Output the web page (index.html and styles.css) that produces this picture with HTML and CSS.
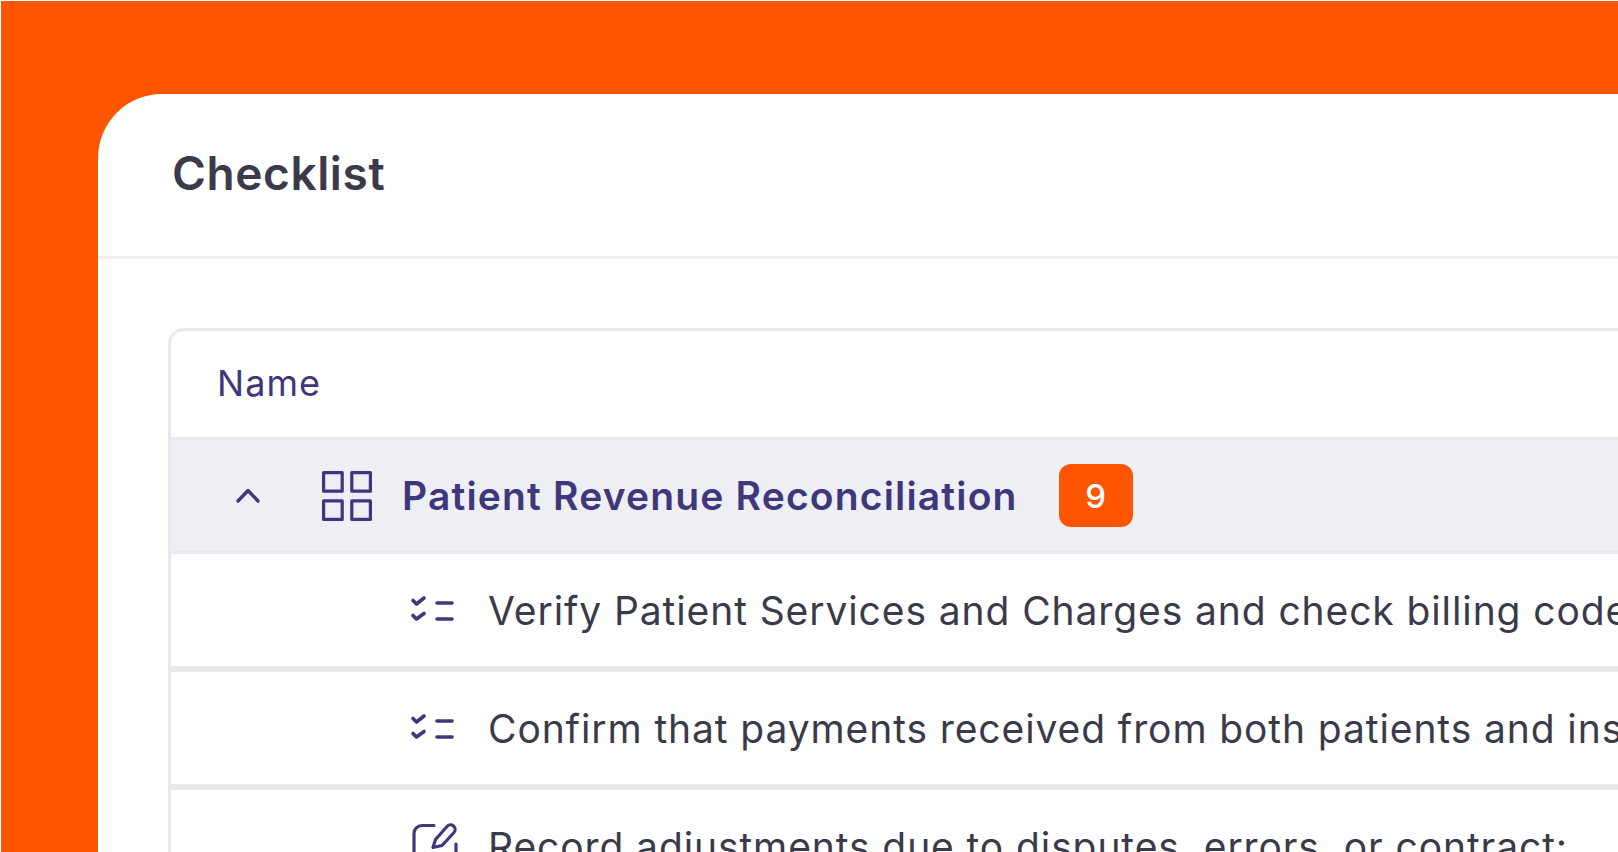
FILE: index.html
```html
<!DOCTYPE html>
<html lang="en">
<head>
    <meta charset="UTF-8">
    <meta name="viewport" content="width=device-width, initial-scale=1.0">
    <title>Checklist</title>
    <link rel="stylesheet" href="styles.css">
</head>
<body>
    <div class="panel">
        <div class="panel-header">
            <h1 class="panel-title">Checklist</h1>
        </div>
        <div class="panel-body">
            <div class="table">
                <div class="table-head">Name</div>
                <div class="group-row">
                    <svg class="chevron" viewBox="0 0 24 15" fill="none" stroke="currentColor" stroke-width="3.4" stroke-linecap="round" stroke-linejoin="round">
                        <path d="M2 13 12 2.500 22 13"/>
                    </svg>
                    <svg class="group-icon" viewBox="0 0 50 50" fill="none" stroke="currentColor" stroke-width="3.2" stroke-linejoin="round">
                        <rect x="1.600" y="1.600" width="18.600" height="18.600"/>
                        <rect x="29.800" y="1.600" width="18.600" height="18.600"/>
                        <rect x="1.600" y="29.800" width="18.600" height="18.600"/>
                        <rect x="29.800" y="29.800" width="18.600" height="18.600"/>
                    </svg>
                    <span class="group-name">Patient Revenue Reconciliation</span>
                    <span class="badge">9</span>
                </div>
                <div class="task-row">
                    <svg class="task-icon" viewBox="0 0 46 46" fill="none" stroke="currentColor" stroke-width="3.6" stroke-linecap="round" stroke-linejoin="round">
                        <path d="M3 13.500l3.500 3.500L14 11M3 28.500L6.500 32 14 26.500M27 16h15M27 32h15"/>
                    </svg>
                    <span class="task-name">Verify Patient Services and Charges and check billing codes</span>
                </div>
                <div class="task-row">
                    <svg class="task-icon" viewBox="0 0 46 46" fill="none" stroke="currentColor" stroke-width="3.6" stroke-linecap="round" stroke-linejoin="round">
                        <path d="M3 13.500l3.500 3.500L14 11M3 28.500L6.500 32 14 26.500M27 16h15M27 32h15"/>
                    </svg>
                    <span class="task-name">Confirm that payments received from both patients and insurance</span>
                </div>
                <div class="task-row">
                    <svg class="task-icon" viewBox="0 0 46 46" fill="none" stroke="currentColor" stroke-width="3.2" stroke-linecap="round" stroke-linejoin="round">
                        <path d="M24 2.500H12a8 8 0 0 0-8 8V38a6 6 0 0 0 6 6h31a5 5 0 0 0 5-5V21"/>
                        <path d="M23 24.500l2.500-8L37 3.500a4.600 4.600 0 0 1 7 6L32 22.500z"/>
                    </svg>
                    <span class="task-name">Record adjustments due to disputes, errors, or contract:</span>
                </div>
            </div>
        </div>
    </div>
</body>
</html>
```

FILE: styles.css
```css
* {
    box-sizing: border-box;
}
html, body {
    height: 100%;
}
body {
    margin: 0;
    padding: 93px 0 0 97px;
    background-color: #ff5500;
    border-top: 1px solid #fff;
    border-left: 1px solid #fff;
    font-family: Inter, 'Liberation Sans', sans-serif;
    overflow: hidden;
}
.panel {
    width: 1600px;
    height: 900px;
    background-color: #fff;
    border-radius: 64px 0 0 0;
}
.panel-header {
    display: flex;
    align-items: center;
    height: 165px;
    padding: 0 0 5px 74px;
    border-bottom: 3px solid #eeeef5;
}
.panel-title {
    margin: 0;
    font-size: 46px;
    font-weight: 600;
    letter-spacing: 0.013em;
    color: #3a3a4a;
}
.panel-body {
    padding: 69px 0 0 70px;
}
.table {
    border: 3px solid #e8e8ef;
    border-right: none;
    border-radius: 16px 0 0 0;
}
.table-head {
    display: flex;
    align-items: center;
    height: 109px;
    padding: 0 0 3px 46px;
    font-size: 36px;
    letter-spacing: 0.03em;
    color: #3e377c;
    border-bottom: 3px solid #e8e8ef;
}
.group-row {
    display: flex;
    align-items: center;
    height: 114px;
    background-color: #eeeff5;
    border-bottom: 3px solid #e8e8ef;
    color: #3e377c;
}
.chevron {
    flex-shrink: 0;
    width: 24px;
    height: 15px;
    margin-left: 65px;
}
.group-icon {
    flex-shrink: 0;
    width: 50px;
    height: 50px;
    margin-left: 62px;
}
.group-name {
    margin-left: 30px;
    font-size: 39px;
    font-weight: 600;
    letter-spacing: 0.03em;
    white-space: nowrap;
}
.badge {
    display: flex;
    align-items: center;
    justify-content: center;
    flex-shrink: 0;
    width: 74px;
    height: 63px;
    margin-left: 41px;
    border-radius: 12px;
    background-color: #ff5500;
    color: #fff;
    font-size: 33px;
    font-weight: 500;
}
.task-row {
    display: flex;
    align-items: center;
    height: 118px;
    border-bottom: 6px solid #e8e8ef;
    white-space: nowrap;
}
.task-icon {
    flex-shrink: 0;
    width: 46px;
    height: 46px;
    margin-left: 239px;
    color: #3e377c;
    overflow: visible;
}
.task-name {
    margin-left: 32px;
    font-size: 39px;
    letter-spacing: 0.023em;
    color: #3a3a4a;
}
```
